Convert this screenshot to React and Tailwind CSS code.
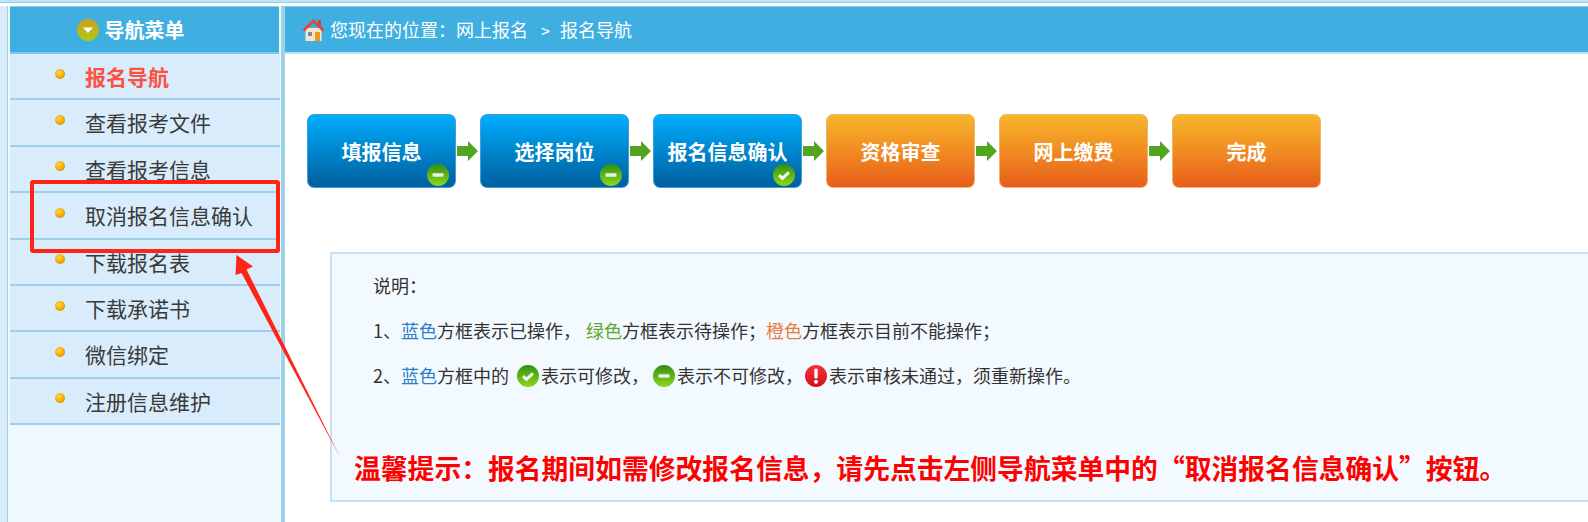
const menu = ["报名导航", "查看报考文件", "查看报考信息", "取消报名信息确认", "下载报名表", "下载承诺书", "微信绑定", "注册信息维护"];

const steps = [
  { label: "填报信息", tone: "blue", status: "minus" },
  { label: "选择岗位", tone: "blue", status: "minus" },
  { label: "报名信息确认", tone: "blue", status: "check" },
  { label: "资格审查", tone: "orange" },
  { label: "网上缴费", tone: "orange" },
  { label: "完成", tone: "orange" },
];

const StatusIcon = ({ type, size = 22 }) => {
  const red = type === "alert";
  return (
    <svg width={size} height={size} viewBox="0 0 22 22" className="shrink-0">
      <defs>
        <linearGradient id={`status-${type}`} x1="0" y1="0" x2="0" y2="1">
          <stop offset="0" stopColor={red ? "#f5333a" : "#2f8f10"} />
          <stop offset="1" stopColor={red ? "#d3101a" : "#8fd81c"} />
        </linearGradient>
      </defs>
      <circle cx="11" cy="11" r="11" fill={`url(#status-${type})`} />
      {type === "minus" && <rect x="5.5" y="9.2" width="11" height="3.6" rx="1" fill="#e8f2e0" />}
      {type === "check" && <path d="M6 11.2l3.4 3.2L16 8.4" fill="none" stroke="#f2f7ee" strokeWidth="3" />}
      {red && (
        <>
          <rect x="9.3" y="3.5" width="3.4" height="10" rx="1.5" fill="#fff" />
          <circle cx="11" cy="16.8" r="2" fill="#fff" />
        </>
      )}
    </svg>
  );
};

const StepArrow = () => (
  <svg width="24" height="22" viewBox="0 0 24 22" className="shrink-0">
    <path d="M1 6h11V1l10 10-10 10v-5H1z" fill="#52a51e" />
  </svg>
);

const Step = ({ label, tone, status }) => (
  <div
    className={`relative flex h-[74px] w-[149px] shrink-0 items-center justify-center rounded-[7px] border pt-[2px] text-[20px] font-bold text-white ${
      tone === "blue"
        ? "border-[#3f9fd8] bg-gradient-to-b from-[#00aeff] to-[#005f9e]"
        : "border-[#eeb56a] bg-gradient-to-b from-[#f6b62a] to-[#e75c1b]"
    }`}
  >
    {label}
    {status && (
      <span className="absolute right-[6px] bottom-[1px] flex">
        <StatusIcon type={status} />
      </span>
    )}
  </div>
);

const House = () => (
  <svg width="23" height="24" viewBox="0 0 23 24" className="shrink-0">
    <rect x="3.5" y="10" width="16" height="13" fill="#f3e6cf" />
    <rect x="13" y="14" width="5" height="9" fill="#ee9a1f" />
    <rect x="6" y="14" width="4" height="4" fill="#7d8b90" />
    <path d="M11.5 1L0.5 11.5l2 2L11.5 5l9 8.5 2-2z" fill="#dd4a3a" />
    <rect x="16" y="2" width="3" height="6" fill="#c9473a" />
  </svg>
);

const Bullet = () => (
  <span className="h-[10px] w-[10px] shrink-0 rounded-full bg-[radial-gradient(circle_at_40%_35%,#ffd84a,#f5a800_55%,#c06a00)]" />
);

export default function App() {
  return (
    <div className="relative h-[522px] w-[1588px] overflow-hidden bg-white font-['Noto_Sans_CJK_SC',sans-serif]">
      <div className="h-[2px] bg-[#bde5f8]" />
      <div className="h-[1px] bg-[#8fd0ee]" />
      <div className="h-[3px] bg-white" />

      <div className="flex h-[516px]">
        {/* left menu */}
        <aside className="w-[285px] shrink-0 bg-[#d8ecfb] pl-[7px]">
          <div className="h-full border-x-[3px] border-l-[1px] border-r-[4px] border-x-[#9dd1ea] bg-[#eff8fc] pl-[2px] pr-[2px]">
            <div className="flex h-[48px] items-center justify-center gap-[6px] border-t border-b-2 border-t-[#8fcdec] border-b-[#80c6e8] bg-[#3fafe2] pr-[28px] text-[20px] font-bold text-white">
              <svg width="22" height="22" viewBox="0 0 22 22" className="shrink-0">
                <defs>
                  <linearGradient id="title-icon" x1="0" y1="0" x2="0" y2="1">
                    <stop offset="0" stopColor="#cba21c" />
                    <stop offset="1" stopColor="#acc81a" />
                  </linearGradient>
                </defs>
                <circle cx="11" cy="11" r="11" fill="url(#title-icon)" />
                <path d="M6 8.5h10L11 14z" fill="#fff" />
              </svg>
              导航菜单
            </div>
            <ul className="mr-[-1px]">
              {menu.map((item, i) => (
                <li
                  key={item}
                  className={`flex h-[46.4px] items-center border-b-2 border-[#9dd1ea] bg-[#d8ecfb] pl-[45px] text-[21px] ${
                    i === 0 ? "font-bold text-[#fb5341]" : "text-[#3a3a3a]"
                  }`}
                >
                  <span className="mb-[5px] flex">
                    <Bullet />
                  </span>
                  <span className="ml-[20px] mt-[1px] whitespace-nowrap">{item}</span>
                </li>
              ))}
            </ul>
          </div>
        </aside>

        {/* main */}
        <main className="min-w-0 flex-1">
          <div className="flex h-[48px] items-center border-t border-b-2 border-t-[#8fcdec] border-b-[#bfe3f3] bg-[#3fafe2] pl-[17px] text-[18px] text-white">
            <House />
            <span className="ml-[5px] mb-[1px] whitespace-nowrap">您现在的位置：网上报名</span>
            <span className="ml-[13px] text-[16px]">&gt;</span>
            <span className="ml-[10px] mb-[1px] whitespace-nowrap">报名导航</span>
          </div>

          <div className="mt-[60px] flex items-center pl-[22px]">
            {steps.map((s, i) => (
              <div key={s.label} className="flex items-center">
                <Step {...s} />
                {i < steps.length - 1 && <StepArrow />}
              </div>
            ))}
          </div>

          <div className="ml-[45px] mt-[64px] h-[250px] border-2 border-r-0 border-[#c5e2f7] bg-[#f3faff] pl-[41px] text-[18px] text-[#333]">
            <p className="mt-[19px] h-[25px] leading-[25px]">说明：</p>
            <p className="mt-[20px] h-[25px] whitespace-nowrap leading-[25px]">
              1、<span className="text-[#2b7fc4]">蓝色</span>方框表示已操作，
              <span className="ml-[5px] text-[#5fa82c]">绿色</span>方框表示待操作；
              <span className="text-[#e87c3e]">橙色</span>方框表示目前不能操作；
            </p>
            <p className="mt-[20px] flex h-[25px] items-center whitespace-nowrap leading-[25px]">
              2、<span className="text-[#2b7fc4]">蓝色</span>方框中的
              <span className="ml-[8px] mr-[2px] flex"><StatusIcon type="check" /></span>表示可修改，
              <span className="ml-[4px] mr-[2px] flex"><StatusIcon type="minus" /></span>表示不可修改，
              <span className="ml-[2px] mr-[2px] flex"><StatusIcon type="alert" /></span>表示审核未通过，须重新操作。
            </p>
            <p className="ml-[-19px] mt-[62px] whitespace-nowrap text-[26.8px] font-bold leading-[36px] text-[#ff0000]">
              温馨提示：报名期间如需修改报名信息，请先点击左侧导航菜单中的“取消报名信息确认”按钮。
            </p>
          </div>
        </main>
      </div>

      {/* red annotation over the page */}
      <div className="absolute left-[30px] top-[180px] h-[73px] w-[250px] rounded-[3px] border-[4px] border-[#ff2318]" />
      <svg width="1588" height="522" viewBox="0 0 1588 522" className="pointer-events-none absolute left-0 top-0">
        <path d="M236.5 255L253 266.5 246.5 269.5 340 457 241.5 273 235.5 275z" fill="#ff2318" />
      </svg>
    </div>
  );
}
